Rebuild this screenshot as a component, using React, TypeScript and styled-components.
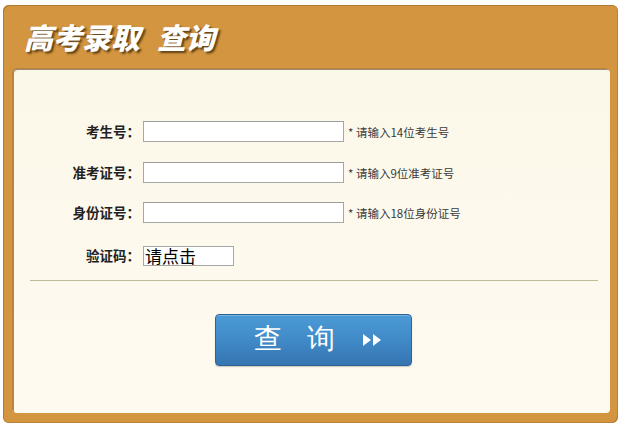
import React from "react";
import styled, { createGlobalStyle } from "styled-components";

const Global = createGlobalStyle`
  html, body { margin: 0; padding: 0; background: #ffffff; }
  body { font-family: "Noto Sans CJK SC", "Noto Sans", sans-serif; }
  * { box-sizing: border-box; }
`;

const Page = styled.div`
  width: 619px;
  height: 427px;
  padding: 5px 1px 4px 3px;
`;

const Frame = styled.div`
  height: 418px;
  background: #d3953f;
  border-radius: 6px;
  box-shadow: inset 1px 1px 0 #b07a33, inset -1px -1px 0 #b98237;
  padding: 0 8px 10px 10px;
  display: flex;
  flex-direction: column;
`;

const Header = styled.div`
  height: 64px;
  display: flex;
  align-items: center;
  padding-left: 11px;
  padding-bottom: 2px;
`;

const Title = styled.h1`
  margin: 0;
  display: flex;
  gap: 17px;
  font-size: 29px;
  font-weight: 900;
  font-style: italic;
  color: #ffffff;
  text-shadow: 2px 2px 2px rgba(60, 40, 10, 0.75);
  line-height: 1;
`;

const Body = styled.div`
  flex: 1;
  background: linear-gradient(#fbf8e9, #fffaf1);
  border-radius: 4px;
  box-shadow: inset 1px 1px 0 #9c8a6c, -1px -1px 0 rgba(150, 110, 60, 0.4);
  padding-top: 52px;
  display: flex;
  flex-direction: column;
`;

const Form = styled.div`
  display: grid;
  grid-template-columns: 127px 201px 1fr;
  column-gap: 3px;
  align-items: center;
`;

const Label = styled.div<{ $top?: number }>`
  text-align: right;
  font-size: 13.5px;
  font-weight: 700;
  color: #222;
  line-height: 21px;
  height: 21px;
  margin-top: ${(p) => p.$top ?? 0}px;
`;

const TextInput = styled.input<{ $top?: number }>`
  width: 201px;
  height: 21px;
  border: 1px solid #a7a7a7;
  border-top-color: #9d9d9d;
  background: #ffffff;
  margin: ${(p) => p.$top ?? 0}px 0 0 0;
  padding: 0 2px;
  outline: none;
`;

const Hint = styled.div<{ $top?: number }>`
  font-size: 11.5px;
  color: #3a3a3a;
  padding-left: 1px;
  margin-top: ${(p) => p.$top ?? 0}px;
  white-space: nowrap;
`;

const CaptchaBox = styled.div`
  width: 91px;
  height: 20px;
  margin-top: 22px;
  border: 1px solid #a7a7a7;
  background: #ffffff;
  font-size: 17px;
  line-height: 18px;
  color: #000;
  padding-left: 1px;
  white-space: nowrap;
`;

const Spacer = styled.div`
  margin-top: 22px;
`;

const Divider = styled.div`
  height: 1px;
  background: #c2bd98;
  margin: 14px 12px 0 17px;
`;

const ButtonRow = styled.div`
  display: flex;
  justify-content: center;
  padding-left: 4px;
  margin-top: 33px;
`;

const SearchButton = styled.button`
  width: 197px;
  height: 52px;
  border: 1px solid #2c6497;
  border-radius: 4px;
  background: linear-gradient(#4b9ad6, #3f88c6 55%, #3575b1);
  box-shadow: inset 0 1px 0 rgba(255, 255, 255, 0.25), 0 1px 1px rgba(0,0,0,0.2);
  color: #ffffff;
  display: flex;
  align-items: center;
  justify-content: flex-start;
  padding: 0 0 2px 38px;
  cursor: pointer;
`;

const ButtonText = styled.span`
  font-size: 28px;
  font-weight: 400;
  letter-spacing: 25px;
  line-height: 1;
`;

const Arrows = styled.svg`
  margin-left: 2px;
  margin-top: 2px;
`;

const rows = [
  { label: "考生号：", hint: "* 请输入14位考生号" },
  { label: "准考证号：", hint: "* 请输入9位准考证号" },
  { label: "身份证号：", hint: "* 请输入18位身份证号" },
];

export default function App() {
  const gaps = [0, 20, 19];
  return (
    <>
      <Global />
      <Page>
        <Frame>
          <Header>
            <Title>
              <span>高考录取</span>
              <span>查询</span>
            </Title>
          </Header>
          <Body>
            <Form>
              {rows.map((r, i) => (
                <React.Fragment key={r.label}>
                  <Label $top={gaps[i]}>{r.label}</Label>
                  <TextInput $top={gaps[i]} />
                  <Hint $top={gaps[i]}>{r.hint}</Hint>
                </React.Fragment>
              ))}
              <Label $top={22}>验证码：</Label>
              <CaptchaBox>请点击</CaptchaBox>
              <Spacer />
            </Form>
            <Divider />
            <ButtonRow>
              <SearchButton type="button">
                <ButtonText>查询</ButtonText>
                <Arrows width="20" height="14" viewBox="0 0 20 14">
                  <path d="M1 1 L9 7 L1 13 Z" fill="#ffffff" />
                  <path d="M11 1 L19 7 L11 13 Z" fill="#ffffff" />
                </Arrows>
              </SearchButton>
            </ButtonRow>
          </Body>
        </Frame>
      </Page>
    </>
  );
}
